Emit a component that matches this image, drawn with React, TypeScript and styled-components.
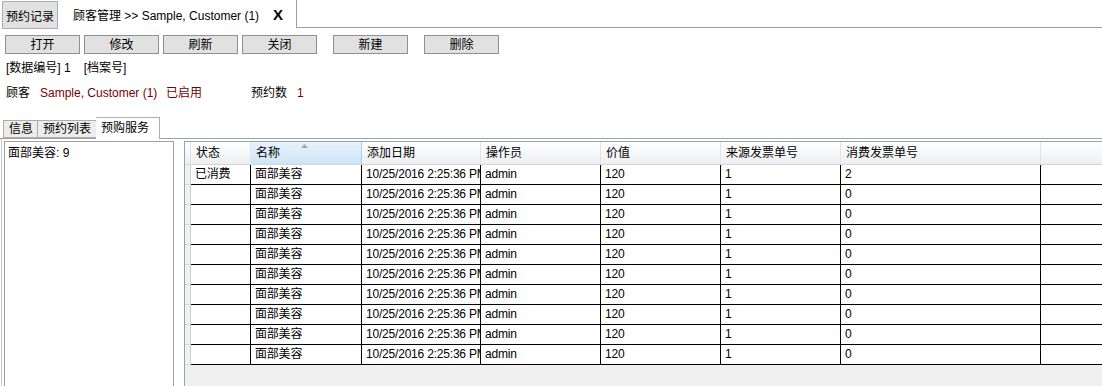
import React from "react";
import styled, { createGlobalStyle } from "styled-components";

const GlobalStyle = createGlobalStyle`
  html, body { margin: 0; padding: 0; background: #ffffff; }
  body {
    font-family: "Liberation Sans", "Noto Sans CJK SC", sans-serif;
    font-size: 12px;
    color: #000;
    overflow: hidden;
  }
`;

const Root = styled.div`
  width: 1102px;
  height: 386px;
  display: flex;
  flex-direction: column;
  overflow: hidden;
`;

const TopBar = styled.div`
  height: 29px;
  display: flex;
  align-items: stretch;
  flex: none;
`;

const RecordTab = styled.div`
  margin: 1px 0 0 2px;
  width: 54px;
  height: 26px;
  background: #e1e1e1;
  border: 1px solid #adadad;
  display: flex;
  align-items: center;
  justify-content: center;
  font-size: 12px;
`;

const TitleTab = styled.div`
  margin-left: 15px;
  display: flex;
  align-items: center;
  padding-bottom: 1px;
  white-space: nowrap;
`;

const CloseX = styled.div`
  margin-left: 14px;
  display: flex;
  align-items: center;
  font-weight: bold;
  font-size: 15px;
  padding-bottom: 1px;
`;

const TopFiller = styled.div`
  margin-left: 13px;
  flex: 1;
  height: 27px;
  border-left: 1px solid #a0a0a0;
  border-bottom: 1px solid #a0a0a0;
`;

const Toolbar = styled.div`
  margin-top: 6px;
  display: flex;
  flex: none;
  padding-left: 5px;
`;

const ToolButton = styled.button<{ $gap: number }>`
  margin: 0 0 0 ${(p) => p.$gap}px;
  padding: 0;
  width: 75px;
  height: 19px;
  background: #e1e1e1;
  border: 1px solid #8f8f8f;
  border-radius: 0;
  font-family: inherit;
  font-size: 12px;
  line-height: 16px;
  color: #000;
`;

const InfoLine = styled.div<{ $top: number }>`
  margin-top: ${(p) => p.$top}px;
  height: 18px;
  line-height: 18px;
  display: flex;
  padding-left: 6px;
  white-space: nowrap;
  flex: none;
`;

const InfoText = styled.span<{ $gap?: number; $red?: boolean; $w?: number }>`
  margin-left: ${(p) => p.$gap ?? 0}px;
  color: ${(p) => (p.$red ? "#7a0000" : "#000")};
  ${(p) => (p.$w ? `width: ${p.$w}px;` : "")}
`;

const TabHeaders = styled.div`
  margin-top: 15px;
  height: 21px;
  display: flex;
  align-items: flex-end;
  padding-left: 3px;
  border-bottom: 1px solid #a0a0a0;
  flex: none;
  position: relative;
  z-index: 1;
`;

const TabHead = styled.div<{ $active?: boolean; $w: number }>`
  width: ${(p) => p.$w}px;
  height: ${(p) => (p.$active ? 22 : 18)}px;
  margin-bottom: ${(p) => (p.$active ? -1 : 0)}px;
  margin-left: ${(p) => (p.$active ? -1 : 0)}px;
  box-sizing: border-box;
  border: 1px solid #acacac;
  border-bottom: ${(p) => (p.$active ? "none" : "1px solid #acacac")};
  background: ${(p) => (p.$active ? "#ffffff" : "#ececec")};
  display: flex;
  align-items: ${(p) => (p.$active ? "flex-start" : "center")};
  padding-top: ${(p) => (p.$active ? 2 : 0)}px;
  padding-left: 5px;
  font-size: 12px;
  line-height: 16px;
  white-space: nowrap;
  & + & { border-left: none; }
`;

const TabBody = styled.div`
  flex: 1;
  display: flex;
  margin-left: 1px;
  border-left: 1px solid #c8c8c8;
  padding-top: 2px;
  min-height: 0;
`;

const SidePanel = styled.div`
  margin-left: 2px;
  width: 165px;
  border: 1px solid #a0a0a0;
  border-bottom: none;
  padding: 3px 0 0 3px;
  line-height: 16px;
  flex: none;
`;

const Grid = styled.div`
  margin-left: 10px;
  flex: 1;
  border-left: 1px solid #8ea4bf;
  border-top: 1px solid #8ea4bf;
  background: #f0f0f0;
  display: flex;
  flex-direction: column;
  min-width: 0;
`;

const cols = "6px 60px 111px 119px 120px 120px 120px 200px 1fr";

const HeaderRow = styled.div`
  display: grid;
  grid-template-columns: ${cols};
  height: 22px;
  border-bottom: 1px solid #d5d5d5;
  background: linear-gradient(#ffffff 0%, #f7f8f9 45%, #eceef1 100%);
`;

const HeaderCell = styled.div<{ $sorted?: boolean }>`
  position: relative;
  border-right: 1px solid ${(p) => (p.$sorted ? "#a9cdec" : "#e1e2e5")};
  background: ${(p) => (p.$sorted ? "linear-gradient(#e8f3fc 0%, #dcecfa 45%, #cfe4f6 100%)" : "transparent")};
  padding-left: 5px;
  line-height: 22px;
  white-space: nowrap;
  overflow: hidden;
  &:last-child { border-right: none; }
`;

const SortArrow = styled.svg`
  position: absolute;
  left: 50px;
  top: 2px;
`;

const DataRow = styled.div`
  display: grid;
  grid-template-columns: ${cols};
  height: 20px;
  background: #ffffff;
`;

const RowHeadCell = styled.div`
  background: #f1f1f1;
  border-right: 1px solid #cfcfcf;
  border-bottom: 1px solid #d8d8d8;
`;

const Cell = styled.div<{ $last?: boolean }>`
  border-right: ${(p) => (p.$last ? "none" : "1px solid #000")};
  border-bottom: 1px solid #000;
  padding-left: 4px;
  line-height: 19px;
  letter-spacing: -0.2px;
  white-space: nowrap;
  overflow: hidden;
`;

const headers = ["状态", "名称", "添加日期", "操作员", "价值", "来源发票单号", "消费发票单号", ""];

const rows = Array.from({ length: 10 }, (_, i) => ({
  status: i === 0 ? "已消费" : "",
  name: "面部美容",
  date: "10/25/2016 2:25:36 PM",
  op: "admin",
  price: "120",
  src: "1",
  use: i === 0 ? "2" : "0",
}));

export default function App() {
  const gaps = [0, 4, 4, 4, 16, 16];
  const labels = ["打开", "修改", "刷新", "关闭", "新建", "删除"];
  return (
    <Root>
      <GlobalStyle />
      <TopBar>
        <RecordTab>预约记录</RecordTab>
        <TitleTab>顾客管理 &gt;&gt; Sample, Customer (1)</TitleTab>
        <CloseX>X</CloseX>
        <TopFiller />
      </TopBar>
      <Toolbar>
        {labels.map((l, i) => (
          <ToolButton key={l} $gap={gaps[i]}>
            {l}
          </ToolButton>
        ))}
      </Toolbar>
      <InfoLine $top={5}>
        <InfoText>[数据编号] 1</InfoText>
        <InfoText $gap={13}>[档案号]</InfoText>
      </InfoLine>
      <InfoLine $top={7}>
        <InfoText $w={34}>顾客</InfoText>
        <InfoText $red $w={126}>Sample, Customer (1)</InfoText>
        <InfoText $red $w={85}>已启用</InfoText>
        <InfoText $w={46}>预约数</InfoText>
        <InfoText $red>1</InfoText>
      </InfoLine>
      <TabHeaders>
        <TabHead $w={35}>信息</TabHead>
        <TabHead $w={59}>预约列表</TabHead>
        <TabHead $w={64} $active>预购服务</TabHead>
      </TabHeaders>
      <TabBody>
        <SidePanel>面部美容: 9</SidePanel>
        <Grid>
          <HeaderRow>
            <HeaderCell />
            {headers.map((h, i) => (
              <HeaderCell key={i} $sorted={i === 1}>
                {h}
                {i === 1 && (
                  <SortArrow width="7" height="4" viewBox="0 0 7 4">
                    <path d="M0 4 L3.5 0 L7 4 Z" fill="#9aa9bd" />
                  </SortArrow>
                )}
              </HeaderCell>
            ))}
          </HeaderRow>
          {rows.map((r, i) => (
            <DataRow key={i}>
              <RowHeadCell />
              <Cell>{r.status}</Cell>
              <Cell>{r.name}</Cell>
              <Cell>{r.date}</Cell>
              <Cell>{r.op}</Cell>
              <Cell>{r.price}</Cell>
              <Cell>{r.src}</Cell>
              <Cell>{r.use}</Cell>
              <Cell $last />
            </DataRow>
          ))}
        </Grid>
      </TabBody>
    </Root>
  );
}
